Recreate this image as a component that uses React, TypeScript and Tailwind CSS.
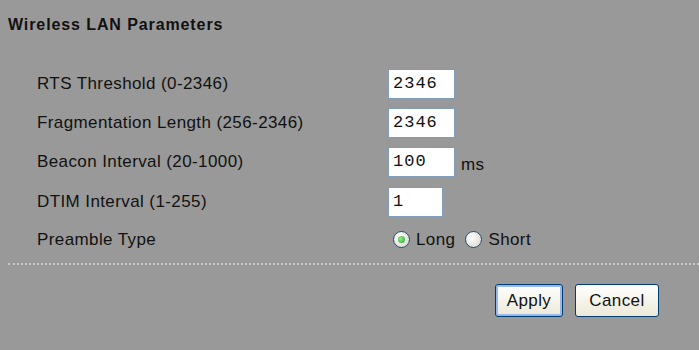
import { useState } from 'react';

const rows = [
  { label: 'RTS Threshold (0-2346)', value: '2346', width: 'w-[67px]' },
  { label: 'Fragmentation Length (256-2346)', value: '2346', width: 'w-[67px]' },
  { label: 'Beacon Interval (20-1000)', value: '100', width: 'w-[67px]', unit: 'ms' },
  { label: 'DTIM Interval (1-255)', value: '1', width: 'w-[55px]' },
];

// XP style radio button
const Radio = ({ checked }: { checked: boolean }) => (
  <span className="w-[17px] h-[17px] rounded-full border border-[#1c5180] bg-[radial-gradient(circle_at_35%_35%,#ffffff,#d6d3c6)] flex items-center justify-center">
    {checked && (
      <span className="w-[7px] h-[7px] rounded-full bg-[radial-gradient(circle_at_40%_40%,#8ff08f,#21a121)]" />
    )}
  </span>
);

export default function App() {
  const [preamble, setPreamble] = useState('long');

  return (
    <div
      className="w-[699px] h-[350px] bg-[#999999] text-[#111111] pt-[15px]"
      style={{ fontFamily: '"Liberation Sans", Arial, sans-serif' }}
    >
      <div className="pl-[8px] text-[16px] leading-[20px] font-bold tracking-[0.9px]">
        Wireless LAN Parameters
      </div>

      <div className="mt-[29px] pl-[37px]">
        {rows.map((row) => (
          <div key={row.label} className="grid grid-cols-[351px_auto] items-center h-[39.3px]">
            <span className="text-[17px] tracking-[0.4px]">{row.label}</span>
            <div className="flex items-end">
              <div
                className={`${row.width} h-[30px] bg-white border border-[#7f9db9] flex items-center px-[4px] text-[17px] tracking-[1px]`}
                style={{ fontFamily: '"Liberation Mono", "Courier New", monospace' }}
              >
                {row.value}
              </div>
              {row.unit && <span className="ml-[6px] text-[17px] tracking-[0.4px] leading-[20px] mb-[2px]">{row.unit}</span>}
            </div>
          </div>
        ))}
        <div className="grid grid-cols-[351px_auto] items-center h-[37px]">
          <span className="text-[17px] tracking-[0.4px]">Preamble Type</span>
          <div className="flex items-center pl-[5px] text-[17px] tracking-[0.4px]">
            <label className="flex items-center gap-[6px] cursor-pointer" onClick={() => setPreamble('long')}>
              <Radio checked={preamble === 'long'} />
              <span>Long</span>
            </label>
            <label className="flex items-center gap-[6px] ml-[10px] cursor-pointer" onClick={() => setPreamble('short')}>
              <Radio checked={preamble === 'short'} />
              <span>Short</span>
            </label>
          </div>
        </div>
      </div>

      <div className="ml-[8px] mt-[5px] border-t-2 border-dotted border-[#c8c8c8]" />

      <div className="flex justify-end gap-[12px] pr-[40px] mt-[19px] text-[17px]">
        <button className="w-[68px] h-[33px] rounded-[3px] border border-[#003c74] bg-[linear-gradient(#ffffff,#ece9d8)] shadow-[inset_0_0_0_2px_#98b8ea] tracking-[0.4px]">
          Apply
        </button>
        <button className="w-[84px] h-[33px] rounded-[3px] border border-[#003c74] bg-[linear-gradient(#ffffff,#ece9d8)] tracking-[0.4px]">
          Cancel
        </button>
      </div>
    </div>
  );
}
